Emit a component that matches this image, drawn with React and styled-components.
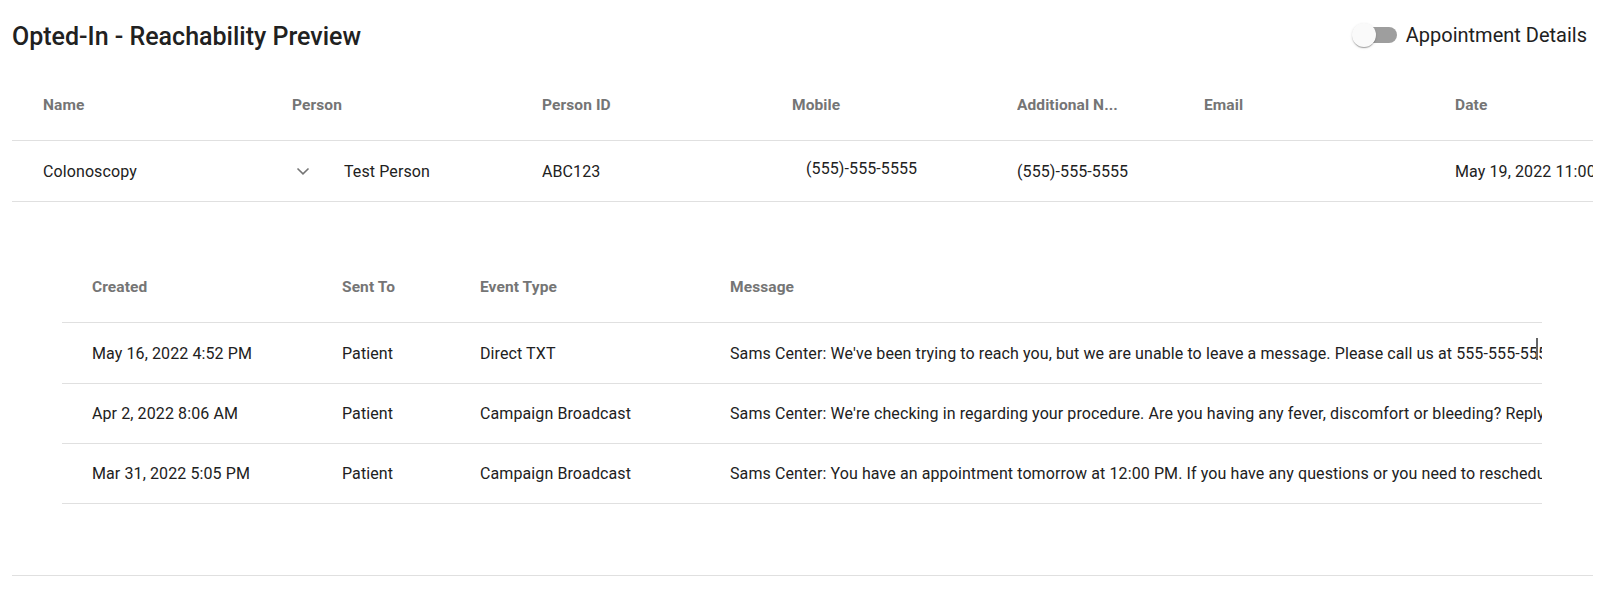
import React, { useState } from "react";
import styled, { createGlobalStyle } from "styled-components";

const GlobalStyle = createGlobalStyle`
  body {
    margin: 0;
    background: #fff;
    font-family: Roboto, "Liberation Sans", Arial, sans-serif;
    color: #212121;
  }
`;

const mainCols = "249px 250px 250px 225px 187px 251px 1fr";
const detailCols = "250px 138px 250px 1fr";

const mainHeaders = ["Name", "Person", "Person ID", "Mobile", "Additional N...", "Email", "Date"];

const appointment = {
  name: "Colonoscopy",
  person: "Test Person",
  personId: "ABC123",
  mobile: "(555)-555-5555",
  additional: "(555)-555-5555",
  email: "",
  date: "May 19, 2022 11:00 AM",
};

const events = [
  {
    created: "May 16, 2022 4:52 PM",
    sentTo: "Patient",
    type: "Direct TXT",
    message:
      "Sams Center: We've been trying to reach you, but we are unable to leave a message. Please call us at 555-555-5555 to discuss your upcoming appointment.",
  },
  {
    created: "Apr 2, 2022 8:06 AM",
    sentTo: "Patient",
    type: "Campaign Broadcast",
    message:
      "Sams Center: We're checking in regarding your procedure. Are you having any fever, discomfort or bleeding? Reply YES or NO.",
  },
  {
    created: "Mar 31, 2022 5:05 PM",
    sentTo: "Patient",
    type: "Campaign Broadcast",
    message:
      "Sams Center: You have an appointment tomorrow at 12:00 PM. If you have any questions or you need to reschedule, please call us at 555-555-5555.",
  },
];

const Chevron = () => (
  <svg width="24" height="24" viewBox="0 0 24 24" fill="none">
    <path d="M6.5 9.5 12 14.8l5.5-5.3" stroke="#757575" strokeWidth="1.6" />
  </svg>
);

const App = () => {
  const [showDetails, setShowDetails] = useState(false);

  return (
    <Page>
      <GlobalStyle />
      <TopBar>
        <Title>Opted-In - Reachability Preview</Title>
        <ToggleLabel onClick={() => setShowDetails(!showDetails)}>
          <Track>
            <Thumb on={showDetails ? 1 : 0} />
          </Track>
          Appointment Details
        </ToggleLabel>
      </TopBar>

      <HeadRow cols={mainCols} pad={31} height={70}>
        {mainHeaders.map((h) => (
          <HeadCell key={h}>{h}</HeadCell>
        ))}
      </HeadRow>

      <BodyRow cols={mainCols} pad={31}>
        <Cell>{appointment.name}</Cell>
        <Cell>
          <ExpandIcon>
            <Chevron />
          </ExpandIcon>
          {appointment.person}
        </Cell>
        <Cell>{appointment.personId}</Cell>
        <Cell shift={14} lift={3}>
          {appointment.mobile}
        </Cell>
        <Cell>{appointment.additional}</Cell>
        <Cell>{appointment.email}</Cell>
        <Cell>{appointment.date}</Cell>
      </BodyRow>

      <DetailPanel>
        <InnerTable>
          <HeadRow cols={detailCols} pad={30} height={70}>
            <HeadCell>Created</HeadCell>
            <HeadCell>Sent To</HeadCell>
            <HeadCell>Event Type</HeadCell>
            <HeadCell>Message</HeadCell>
          </HeadRow>
          {events.map((ev, i) => (
            <BodyRow key={i} cols={detailCols} pad={30}>
              <Cell>{ev.created}</Cell>
              <Cell>{ev.sentTo}</Cell>
              <Cell>{ev.type}</Cell>
              <Cell>{ev.message}</Cell>
              {i === 0 && <TextCursor />}
            </BodyRow>
          ))}
        </InnerTable>
      </DetailPanel>
    </Page>
  );
};

export default App;

const Page = styled.div`
  padding: 0 17px 0 12px;
  overflow: hidden;
`;

const TopBar = styled.div`
  display: flex;
  justify-content: space-between;
  align-items: center;
  height: 70px;
  padding-right: 6px;
`;

const Title = styled.h2`
  margin: 0;
  padding-top: 3px;
  font-size: 25px;
  font-weight: 500;
  color: #212121;
`;

const ToggleLabel = styled.label`
  display: flex;
  align-items: center;
  gap: 9px;
  font-size: 20px;
  color: #212121;
  cursor: pointer;
`;

const Track = styled.span`
  position: relative;
  display: block;
  width: 36px;
  height: 16px;
  margin-left: 8px;
  border-radius: 8px;
  background: #9e9e9e;
`;

const Thumb = styled.span`
  position: absolute;
  top: -4px;
  left: ${(p) => (p.on ? "14px" : "-9px")};
  width: 24px;
  height: 24px;
  border-radius: 50%;
  background: #fafafa;
  box-shadow: 0 2px 1px -1px rgba(0, 0, 0, 0.2), 0 1px 1px rgba(0, 0, 0, 0.14),
    0 1px 3px rgba(0, 0, 0, 0.12);
`;

const HeadRow = styled.div`
  display: grid;
  grid-template-columns: ${(p) => p.cols};
  align-items: center;
  height: ${(p) => p.height}px;
  padding-left: ${(p) => p.pad}px;
  border-bottom: 1px solid #e0e0e0;
`;

const BodyRow = styled.div`
  position: relative;
  display: grid;
  grid-template-columns: ${(p) => p.cols};
  align-items: center;
  box-sizing: border-box;
  height: 61px;
  padding-left: ${(p) => p.pad}px;
  border-bottom: 1px solid #e0e0e0;
`;

const HeadCell = styled.div`
  font-size: 15.5px;
  font-weight: 700;
  letter-spacing: 0.1px;
  color: #757575;
  white-space: nowrap;
  overflow: hidden;
`;

const Cell = styled.div`
  display: flex;
  align-items: center;
  font-size: 16px;
  letter-spacing: 0.1px;
  color: #212121;
  white-space: nowrap;
  overflow: hidden;
  padding-left: ${(p) => p.shift || 0}px;
  margin-bottom: ${(p) => (p.lift || 0) * 2}px;
`;

const ExpandIcon = styled.span`
  display: flex;
  margin-left: -1px;
  margin-right: 29px;
`;

const DetailPanel = styled.div`
  padding: 50px 0 71px 50px;
  border-bottom: 1px solid #e0e0e0;
`;

const InnerTable = styled.div`
  width: 1480px;
  & > div:nth-child(2) {
    height: 61px;
  }
  & > div:nth-child(n + 3) {
    height: 60px;
  }
`;

const TextCursor = styled.span`
  position: absolute;
  left: 1474px;
  top: 15px;
  width: 2px;
  height: 22px;
  background: #666;
`;
